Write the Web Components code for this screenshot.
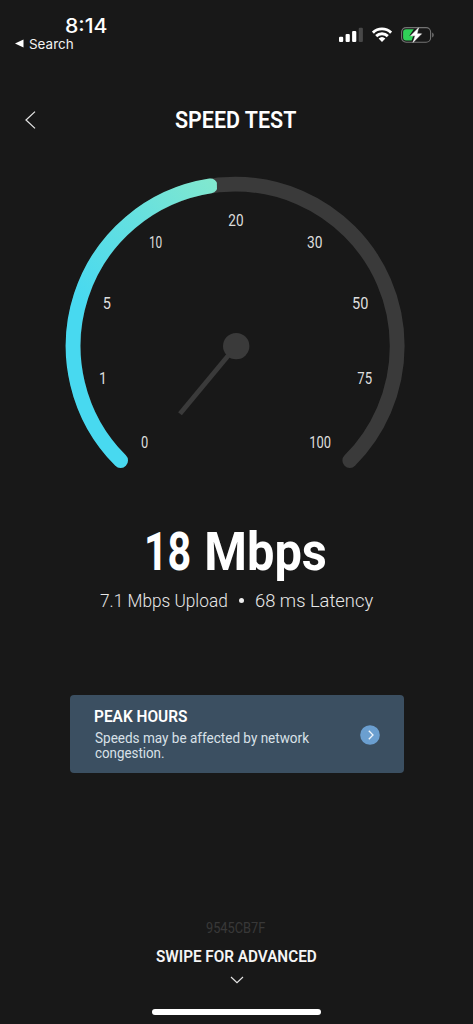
<!DOCTYPE html>
<html lang="en">
<head>
<meta charset="utf-8">
<meta name="viewport" content="width=device-width">
<title>Speed Test</title>
<style>
html, body { margin: 0; background: #181818; }
body { height: 1024px; overflow: hidden; font-family: Roboto, "Liberation Sans", sans-serif; color: #fff; }
</style>
</head>
<body>
<speed-app></speed-app>
<script>
const SVG = 'http://www.w3.org/2000/svg';
const pen = document.createElement('canvas').getContext('2d');

// SVG text condensed so its ink spans exactly `width`, starting at x.
function fitted(text, x, baseline, width, size, weight, family) {
  pen.font = `${weight} ${size}px ${family}`;
  const m = pen.measureText(text);
  const k = width / (m.actualBoundingBoxRight + m.actualBoundingBoxLeft);
  const t = document.createElementNS(SVG, 'text');
  t.textContent = text;
  t.setAttribute('transform', `translate(${x + m.actualBoundingBoxLeft * k} ${baseline}) scale(${k} 1)`);
  t.setAttribute('style', `font:${weight} ${size}px ${family};fill:currentColor`);
  return t;
}
const FACE = 'Roboto, "Liberation Sans", sans-serif';

function define(name, html, setup) {
  customElements.define(name, class extends HTMLElement {
    connectedCallback() {
      if (this.shadowRoot) return;
      this.attachShadow({ mode: 'open' }).innerHTML = html;
      if (setup) setup(this, this.shadowRoot);
    }
  });
}

// One line of lettering; the box is the ink width by the cap height.
define('fit-text', `<style>
:host { display: block; flex: none; line-height: 0; }
svg { display: block; overflow: visible; }
</style><svg></svg>`, (el, root) => {
  const svg = root.querySelector('svg');
  const w = +el.getAttribute('w'), h = +el.getAttribute('cap');
  svg.setAttribute('width', w);
  svg.setAttribute('height', h);
  const inter = el.getAttribute('face') === 'system';
  const size = +(h / (inter ? 0.727 : 0.711)).toFixed(2);
  svg.append(fitted(el.getAttribute('text'), 0, h, w, size,
    el.getAttribute('weight') || '400', inter ? 'Inter, sans-serif' : FACE));
});

define('status-bar', `<style>
:host { display: flex; justify-content: space-between; height: 92.3px; box-sizing: border-box; padding: 18.7px 38.2px 0 15px; }
.clock { margin-left: 51.4px; }
.back { display: flex; align-items: center; gap: 5.5px; margin-top: 6px; color: #f2f2f2; }
svg { display: block; }
.icons { display: flex; align-items: flex-start; gap: 9px; padding-top: 8.3px; }
</style>
<div>
  <fit-text class="clock" face="system" text="8:14" w="40.4" cap="14.4" weight="550"></fit-text>
  <div class="back"><svg width="8.5" height="9" viewBox="0 0 8.5 9"><path d="M0 4.5 8.5 .5v8z" fill="#fff"/></svg>
  <fit-text face="system" text="Search" w="43.8" cap="9.6" weight="400"></fit-text></div>
</div>
<div class="icons">
  <svg width="24" height="16" viewBox="0 0 24 16" fill="#fff"><rect y="9.7" width="4.2" height="5.3" rx="1.1"/><rect x="6.6" y="7" width="4.2" height="8" rx="1.1"/><rect x="13.1" y="4" width="4.2" height="11" rx="1.1"/><rect x="19.7" y=".8" width="4.2" height="14.2" rx="1.1" fill="#484848"/></svg>
  <svg width="20" height="16" viewBox="0 0 20 16"><g fill="none" stroke="#fff" stroke-width="2.9"><path d="M.9 5.6a13 13 0 0 1 18.2 0"/><path d="M4.2 9.1a8.3 8.3 0 0 1 11.6 0"/></g><path d="M6.6 11.5a5 5 0 0 1 6.8 0L10 15z" fill="#fff"/></svg>
  <svg width="34" height="16" viewBox="0 0 34 16"><rect x=".6" y=".6" width="29" height="14.6" rx="4.5" fill="none" stroke="#737373" stroke-width="1.1"/><path d="M31.2 5.4c2 .8 2 4.2 0 5z" fill="#737373"/><path d="M5 2.2h7.8L8.3 8.7h4l-1.6 4.8H5A2.9 2.9 0 0 1 2.1 10.6V5.1A2.9 2.9 0 0 1 5 2.2z" fill="#30d158"/><path d="M17.6 .8 9.6 8.8h4.6l-2.2 6.6 8.6-8.6H16z" fill="#fff" stroke="#fff" stroke-width=".5"/></svg>
</div>`);

define('page-header', `<style>
:host { display: grid; grid-template-columns: 175.2px auto 1fr; align-items: center; height: 55px; padding-left: 0; }
svg { display: block; margin-left: 25px; }
</style>
<svg width="11" height="18" viewBox="0 0 11 18"><path d="M10 .6 1 9l9 8.4" fill="none" stroke="#e4e4e4" stroke-width="1.25"/></svg>
<fit-text text="SPEED TEST" w="122.4" cap="16.8" weight="600"></fit-text>`);

define('speed-gauge', `<style>
:host { display: block; color: #dedede; }
svg { display: block; margin: 0 auto; }
</style>
<svg width="473" height="340" viewBox="0 147 473 340">
<defs><linearGradient id="sweep" gradientUnits="userSpaceOnUse" x1="90" y1="310" x2="216" y2="180"><stop offset="0" stop-color="#48d9f0"/><stop offset=".55" stop-color="#66e0df"/><stop offset="1" stop-color="#82e8ce"/></linearGradient>
<clipPath id="stop"><path d="M40 160H216.4L217.2 200V480H40z"/></clipPath></defs>
<g fill="none" stroke-width="14.8" stroke-linecap="round">
<path d="M120.6 460.6A162 162 0 1 1 349.8 460.6" stroke="#3a3a3a"/>
<path d="M120.6 460.6A162 162 0 0 1 210.4 185.9" stroke="url(#sweep)" clip-path="url(#stop)"/></g>
<path d="M236.2 346 180 413.7" stroke="#3a3a3a" stroke-width="4.8"/>
<circle cx="236.2" cy="346.1" r="13.2" fill="#3a3a3a"/>
</svg>`, (el, root) => {
  // label, left edge, baseline, ink width
  const marks = [['0', 141, 448, 7], ['1', 99.9, 384, 4.2], ['5', 103.6, 308.6, 7], ['10', 149.6, 248.4, 12.4],
    ['20', 228.3, 225.8, 15], ['30', 307, 248.4, 15.2], ['50', 353, 308.6, 15.2], ['75', 357.3, 384, 14.5], ['100', 310, 448, 20.8]];
  for (const [label, x, y, w] of marks)
    root.querySelector('svg').append(fitted(label, x, y, w, 16.6, 400, FACE));
});

define('speed-result', `<style>
:host { display: flex; flex-direction: column; align-items: center; padding-top: 44.4px; height: 163.1px; }
.speed { display: flex; gap: 17.4px; }
.detail { display: flex; align-items: center; margin-top: 24.4px; gap: 12.3px; color: #e8e8e8; }
i { width: 5px; height: 5px; border-radius: 50%; background: #eee; }
</style>
<div class="speed"><fit-text text="18" w="43" cap="38" weight="700"></fit-text><fit-text text="Mbps" w="118.6" cap="38" weight="700"></fit-text></div>
<div class="detail"><fit-text text="7.1 Mbps Upload" w="126.4" cap="13.3" weight="300"></fit-text><i></i><fit-text text="68 ms Latency" w="117.2" cap="13.3" weight="300"></fit-text></div>`);

define('notice-card', `<style>
:host { display: flex; align-items: center; justify-content: space-between; box-sizing: border-box; width: 333.5px; height: 78.7px; margin-left: 70px; padding: 1px 23.8px 0 24.9px; border-radius: 4px; background: #3b4f61; }
.copy { display: grid; }
.line { margin-top: 11.2px; color: #d9e1e8; }
.last { margin-top: 4.6px; color: #d9e1e8; }
svg { display: block; }
</style>
<div class="copy"><fit-text text="PEAK HOURS" w="92.6" cap="11.4" weight="600"></fit-text>
<fit-text class="line" text="Speeds may be affected by network" w="214.8" cap="10.2" weight="400"></fit-text>
<fit-text class="last" text="congestion." w="68.8" cap="10.2" weight="400"></fit-text></div>
<svg width="20" height="20" viewBox="0 0 20 20"><circle cx="10" cy="10" r="9.8" fill="#6b9fd0"/><path d="M8.8 5.8 13 10l-4.2 4.2" fill="none" stroke="#f0f6fb" stroke-width="1.3"/></svg>`);

define('advanced-hint', `<style>
:host { display: flex; flex-direction: column; align-items: center; padding-top: 149.3px; }
.id { color: #383838; margin-right: 1px; }
.cta { margin-top: 16.6px; color: #f5f5f5; }
svg { display: block; margin-top: 14.8px; }
.home { width: 169px; height: 6px; border-radius: 3px; background: #fff; margin-top: 24.4px; }
</style>
<fit-text class="id" text="9545CB7F" w="59.4" cap="10.2" weight="400"></fit-text>
<fit-text class="cta" text="SWIPE FOR ADVANCED" w="161" cap="11.9" weight="600"></fit-text>
<svg width="14" height="8" viewBox="0 0 14 8"><path d="M1 1l6 5.6L13 1" fill="none" stroke="#e4e4e4" stroke-width="1.2"/></svg>
<div class="home"></div>`);

define('speed-app', `<style>
:host { display: block; width: 473px; height: 1024px; overflow: hidden; background: #181818; }
</style>
<status-bar></status-bar><page-header></page-header><speed-gauge></speed-gauge><speed-result></speed-result><notice-card></notice-card><advanced-hint></advanced-hint>`);
</script>
</body>
</html>
